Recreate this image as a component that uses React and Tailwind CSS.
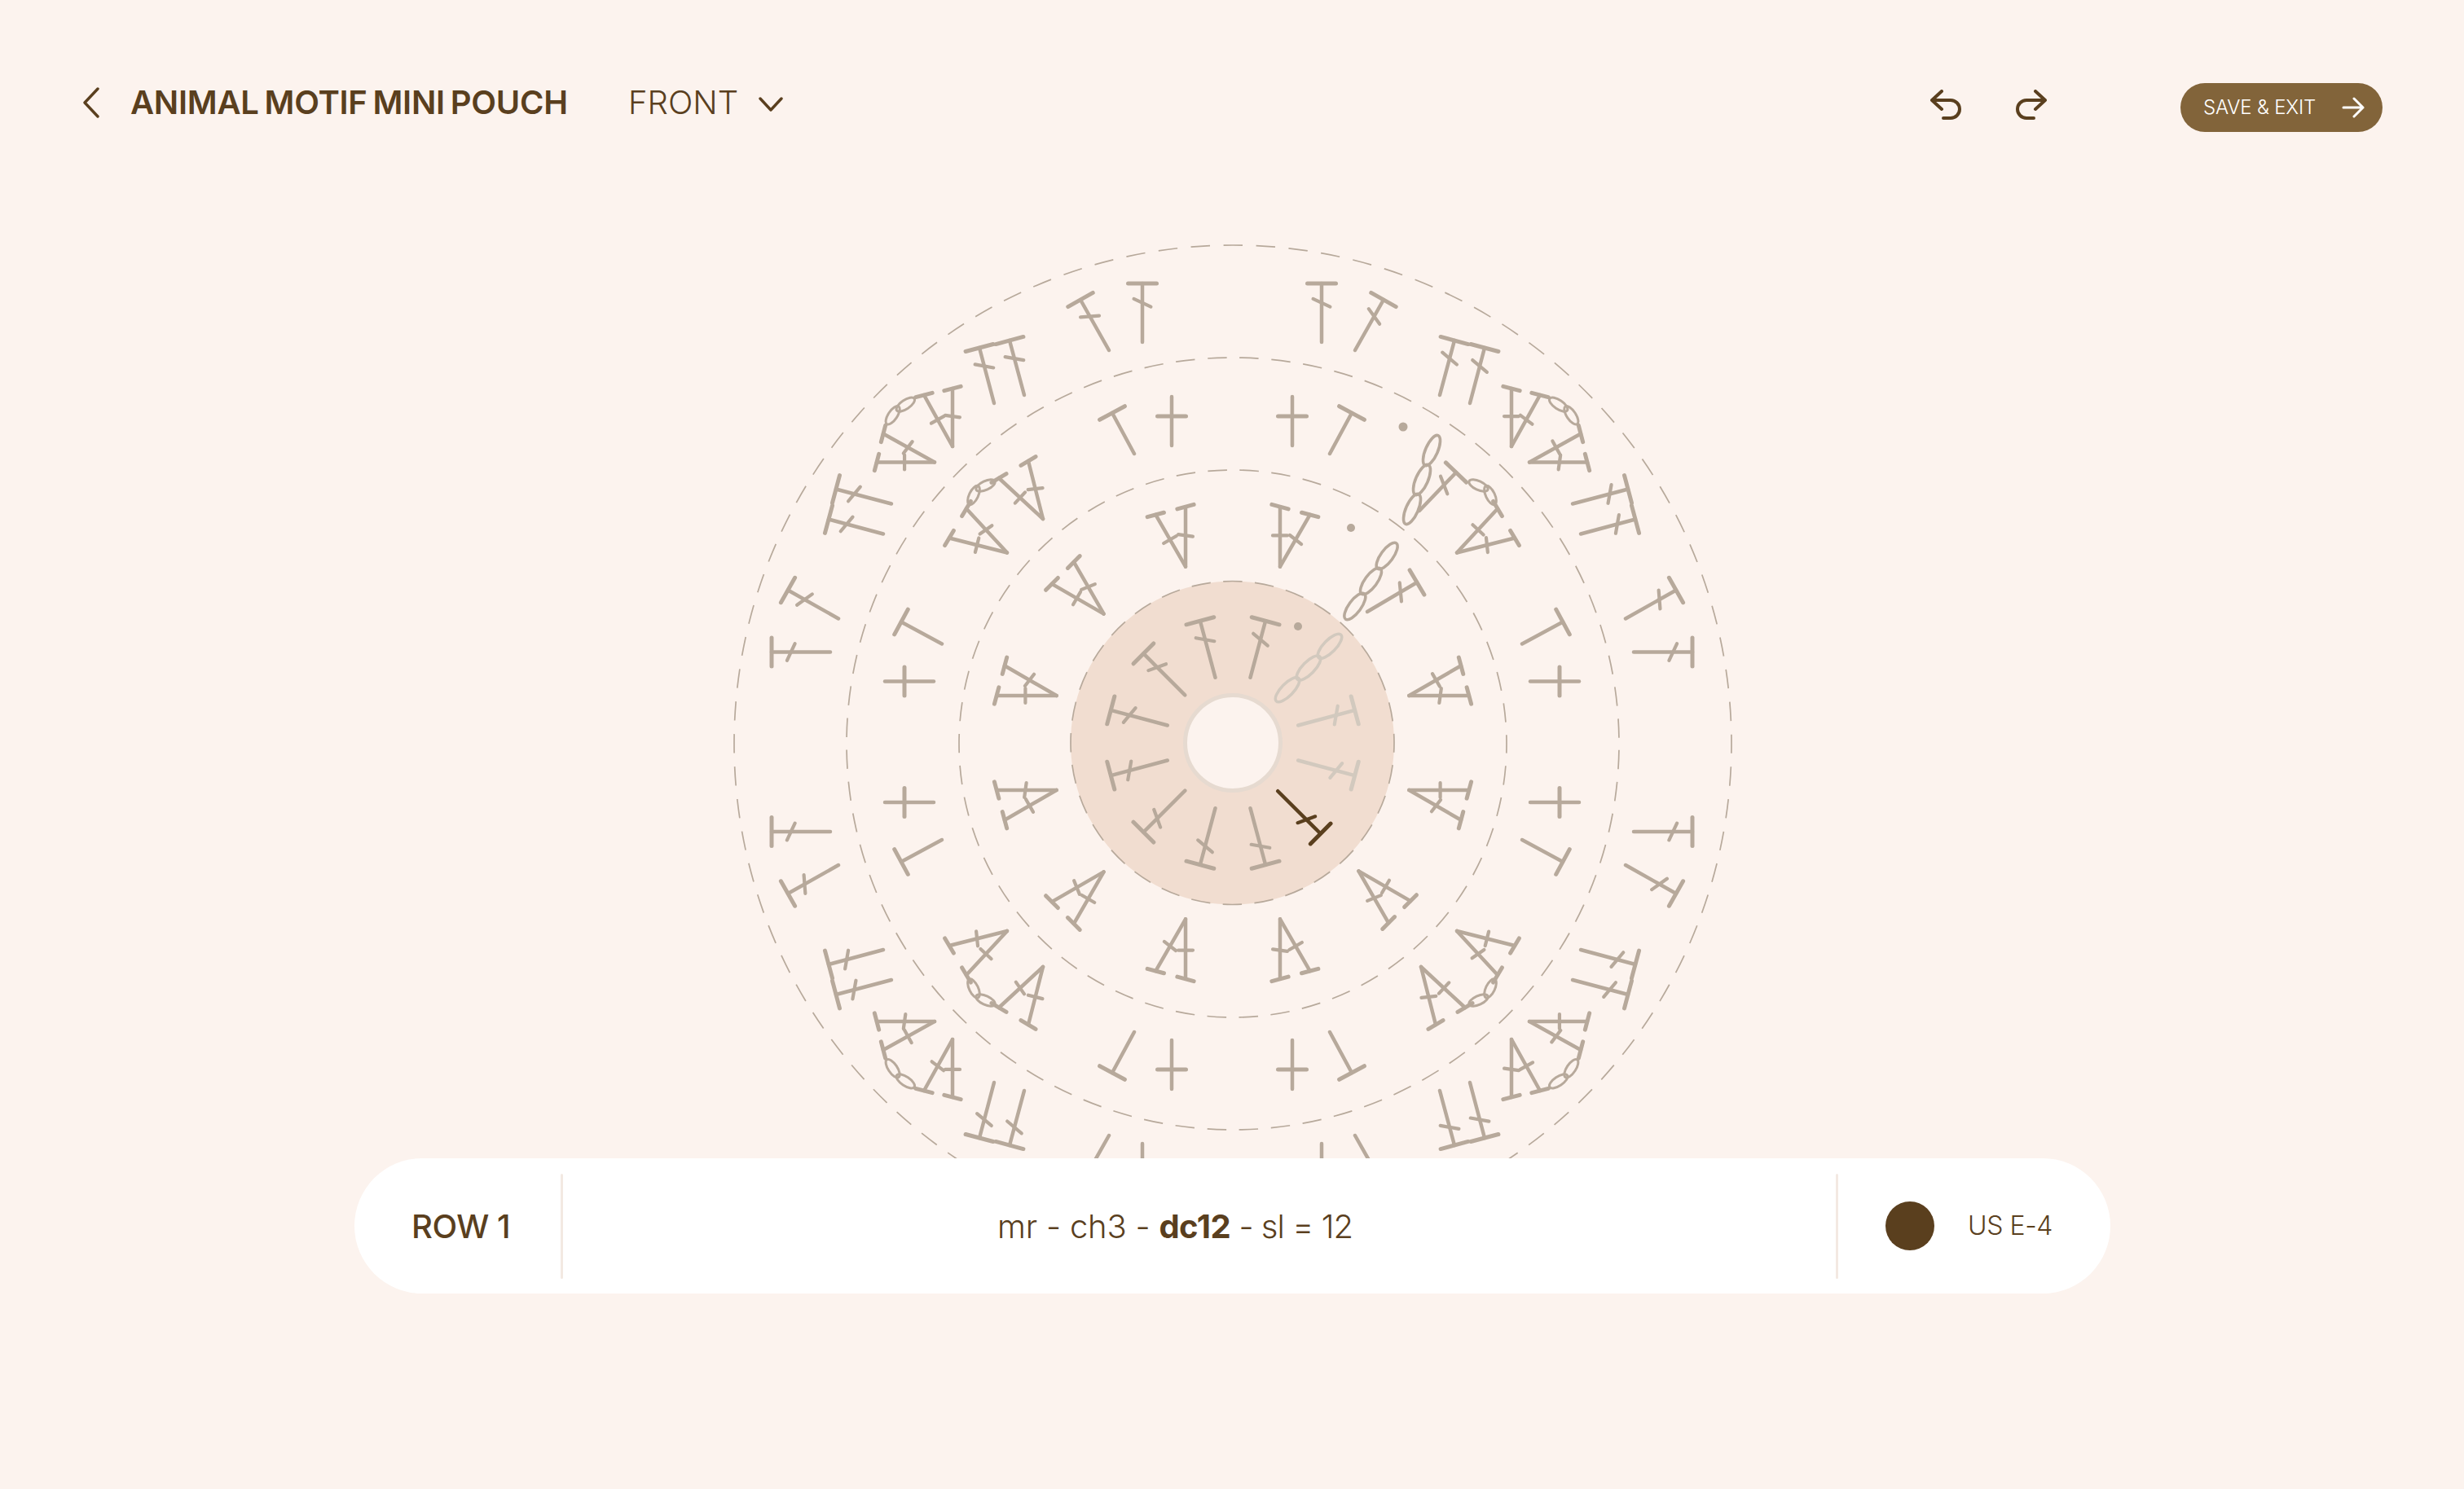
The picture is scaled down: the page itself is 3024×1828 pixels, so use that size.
import React from "react";

const SIZE = 1320;
const C = SIZE / 2;
const BASE = "#b7a99b";
const LIGHT = "#d2c9be";
const DARK = "#5a3f1e";
const rad = (d) => (d * Math.PI) / 180;

function unit(a, b) {
  const dx = b[0] - a[0];
  const dy = b[1] - a[1];
  const l = Math.hypot(dx, dy);
  return [dx / l, dy / l];
}
const polar = (r, deg) => [r * Math.cos(rad(deg)), r * Math.sin(rad(deg))];
const seg = (c, a, b, w = 4.5) => ({ t: "l", c, a, b, w });
const cross = (c, p, dir, len, w = 5) => seg(c, [p[0] - (dir[0] * len) / 2, p[1] - (dir[1] * len) / 2], [p[0] + (dir[0] * len) / 2, p[1] + (dir[1] * len) / 2], w);
const at = (a, b, p) => [a[0] + (b[0] - a[0]) * p, a[1] + (b[1] - a[1]) * p];

function tick(c, base, top, p, len, deg) {
  const u = unit(base, top);
  const v = [-u[1], u[0]];
  const s = Math.sin(rad(deg));
  const k = Math.cos(rad(deg));
  return cross(c, at(base, top, p), [v[0] * k - v[1] * s, v[0] * s + v[1] * k], len, 4.2);
}

function dc(c, base, top) {
  const u = unit(base, top);
  return [seg(c, base, top), cross(c, top, [-u[1], u[0]], 35), tick(c, base, top, 0.67, 23, 25)];
}
function tee(c, base, top) {
  const u = unit(base, top);
  return [seg(c, base, top), cross(c, top, [-u[1], u[0]], 35)];
}
function plus(c, base, top) {
  const u = unit(base, top);
  return [seg(c, base, top), cross(c, at(base, top, 0.6), [-u[1], u[0]], 35)];
}
function vee(c, base, a, b) {
  const mid = unit(base, [(a[0] + b[0]) / 2, (a[1] + b[1]) / 2]);
  const perp = [-mid[1], mid[0]];
  const ua = unit(base, a);
  const crossA = ua[0] * mid[1] - ua[1] * mid[0];
  const ccw = crossA > 0 ? a : b;
  const cw = crossA > 0 ? b : a;
  return [
    seg(c, base, a),
    seg(c, base, b),
    cross(c, a, perp, 21),
    cross(c, b, perp, 21),
    tick(c, base, ccw, 0.52, 18, 0),
    tick(c, base, cw, 0.52, 18, 8),
  ];
}
function chain(c, a, b, n, ry, tilt = 0, w = 3.6) {
  const out = [];
  const ang = (Math.atan2(b[1] - a[1], b[0] - a[0]) * 180) / Math.PI + tilt;
  const rx = Math.hypot(b[0] - a[0], b[1] - a[1]) / (2 * n) + 1;
  for (let i = 0; i < n; i++) {
    out.push({ t: "e", c, p: at(a, b, (i + 0.5) / n), rx, ry, ang, w });
  }
  return out;
}

const rawMirrors = [
  ([x, y]) => [x, y],
  ([x, y]) => [-x, y],
  ([x, y]) => [x, -y],
  ([x, y]) => [-x, -y],
  ([x, y]) => [y, x],
  ([x, y]) => [-y, x],
  ([x, y]) => [y, -x],
  ([x, y]) => [-y, -x],
];
const mirrors = rawMirrors.map((f, i) => (p) => {
  const r = f(p);
  return [r[0] < 0 ? r[0] - 2 : r[0], i >= 4 && r[1] < 0 ? r[1] - 2.5 : r[1]];
});

function buildShapes() {
  const s = [];
  // row 1
  [75, 105, 135, 165, 195, 225, 255, 285].forEach((d) => s.push(...dc(BASE, polar(83, d), polar(155, d))));
  s.push(...dc(LIGHT, polar(83, 15), polar(155, 15)));
  s.push(...dc(LIGHT, polar(83, -15), polar(155, -15)));
  s.push(...dc(DARK, polar(81, 47), polar(155, 46)));
  s.push(...chain(LIGHT, [54, -52], [132, -132], 3, 7.5));
  s.push({ t: "d", c: BASE, p: [80, -143], r: 5 });

  // row 2
  [-15, 15, 45, 75, 105, 135, 165, 195, 225, 255, 285].forEach((d) => {
    const off = d === 45 ? [-4, -1] : [0, 0];
    const mv = (p) => [p[0] + off[0], p[1] + off[1]];
    const top = polar(295, d);
    const t = [-Math.sin(rad(d)) * 19, Math.cos(rad(d)) * 19];
    s.push(...vee(BASE, mv(polar(224, d)), mv([top[0] - t[0], top[1] - t[1]]), mv([top[0] + t[0], top[1] + t[1]])));
  });
  s.push(...dc(BASE, [165, -161], [226, -197]));
  s.push(...chain(BASE, [140, -152], [199, -245], 3, 7.5, 4));
  s.push({ t: "d", c: BASE, p: [145, -264], r: 5 });

  // rows 3 and 4: the chart is mirrored through eight octants
  mirrors.forEach((m, i) => {
    s.push(...plus(BASE, m([73, -365]), m([73, -425])));
    s.push(...tee(BASE, m([119, -355]), m([146, -405])));
    if (i === 0) {
      s.push(...dc(BASE, [229, -285], [274, -332]));
      s.push(...chain(BASE, [214, -269], [250, -377], 3, 7.5, 5));
      s.push({ t: "d", c: BASE, p: [209, -388], r: 5.5 });
    } else {
      s.push(...vee(BASE, m([231, -275]), m([249, -346]), m([285, -325])));
    }
    s.push(...chain(BASE, m([291, -321]), m([312, -311]), 1, 5.5, 0, 3));

    s.push(...dc(BASE, m([109, -492]), m([109, -564])));
    s.push(...dc(BASE, m([150, -482]), m([185, -544])));
    s.push(...dc(BASE, m([254, -427]), m([272, -494])));
    s.push(...dc(BASE, m([291, -417]), m([309, -485])));
    s.push(...vee(BASE, m([342, -364]), m([342, -435]), m([377, -427])));
    s.push(...chain(BASE, m([389.7, -422]), m([409.7, -408.7]), 1, 5.5, 0, 3));
  });
  return s;
}

function Ring({ r, n, cx, cy, gap }) {
  const len = (2 * Math.PI * r) / n;
  const dash = 23.5;
  return (
    <circle
      cx={cx}
      cy={cy}
      r={r}
      fill="none"
      stroke={BASE}
      strokeWidth="1.7"
      strokeDasharray={`${dash} ${len - dash}`}
      strokeDashoffset={dash / 2 + (gap ? len / 2 : 0)}
    />
  );
}

function Shape({ s }) {
  if (s.t === "l") {
    return <line x1={C + s.a[0]} y1={C + s.a[1]} x2={C + s.b[0]} y2={C + s.b[1]} stroke={s.c} strokeWidth={s.w} strokeLinecap="round" />;
  }
  if (s.t === "d") {
    return <circle cx={C + s.p[0]} cy={C + s.p[1]} r={s.r} fill={s.c} />;
  }
  return (
    <ellipse
      cx={C + s.p[0]}
      cy={C + s.p[1]}
      rx={s.rx}
      ry={s.ry}
      fill="none"
      stroke={s.c}
      strokeWidth={s.w}
      transform={`rotate(${s.ang} ${C + s.p[0]} ${C + s.p[1]})`}
    />
  );
}

function Chart() {
  const shapes = buildShapes();
  return (
    <svg width={SIZE} height={SIZE} viewBox={`0 0 ${SIZE} ${SIZE}`} className="block ml-[853px]">
      <circle cx={C - 0.5} cy={C} r={198.5} fill="#f1ddd0" />
      <circle cx={C} cy={C} r={58.5} fill="#fcf3ee" stroke="#e6dad0" strokeWidth="5" />
      <Ring r={198.5} n={32} cx={C - 0.5} cy={C} />
      <Ring r={336} n={54} cx={C} cy={C + 1} />
      <Ring r={474} n={76} cx={C} cy={C + 1} gap />
      <Ring r={612} n={96} cx={C} cy={C + 1} />
      {shapes.map((s, i) => (
        <Shape key={i} s={s} />
      ))}
    </svg>
  );
}

const stroke = { fill: "none", stroke: "currentColor", strokeLinecap: "round", strokeLinejoin: "round" };

export default function App() {
  return (
    <div className="w-[3024px] h-[1828px] overflow-hidden bg-[#fcf3ee] text-[#5a3f1e] font-['Inter',sans-serif]">
      <header className="h-[252px] pl-[102px] pr-[100px] flex items-center">
        <svg width="20" height="38" viewBox="0 0 20 38" {...stroke} strokeWidth="3.4" className="mr-[38px]">
          <path d="M18 2 L2 19 L18 36" />
        </svg>
        <h1 className="text-[40px] leading-none font-semibold tracking-[-0.25px] [word-spacing:-3px] w-[612px] whitespace-nowrap">ANIMAL MOTIF MINI POUCH</h1>
        <span className="text-[40px] leading-none font-light tracking-[0px] w-[160px] -ml-[1px]">FRONT</span>
        <svg width="30" height="18" viewBox="0 0 30 18" {...stroke} strokeWidth="3.4" className="mt-[4px]">
          <path d="M2 2 L15 16 L28 2" />
        </svg>
        <div className="ml-auto self-start mt-[102px] flex items-start">
          <svg width="38" height="38" viewBox="0 0 38 38" {...stroke} strokeWidth="4" className="mt-[8px]">
            <path d="M14 2 L2 13 L14 24 M2 13 H25 a11 11 0 0 1 0 22 H16" />
          </svg>
          <svg width="38" height="38" viewBox="0 0 38 38" {...stroke} strokeWidth="4" className="ml-[67px] mt-[8px]">
            <path d="M24 2 L36 13 L24 24 M36 13 H13 a11 11 0 0 0 0 22 H22" />
          </svg>
          <button className="ml-[164px] w-[248px] h-[60px] rounded-full bg-[#82643a] text-white flex items-center pl-[28px]">
            <span className="text-[24px] leading-none font-light tracking-[-0.2px] whitespace-nowrap">SAVE &amp; EXIT</span>
            <svg width="28" height="26" viewBox="0 0 28 26" {...stroke} strokeWidth="3" className="ml-auto mr-[22px]">
              <path d="M2 13 H26 M15 2 L26 13 L15 24" />
            </svg>
          </button>
        </div>
      </header>
      <main className="h-[1170px] overflow-hidden">
        <Chart />
      </main>
      <section className="ml-[435px] w-[2155px] h-[166px] rounded-full bg-white flex items-center">
        <span className="w-[253px] pl-[70px] pt-[2px] text-[40px] leading-none font-medium tracking-[-0.5px] whitespace-nowrap">ROW 1</span>
        <div className="w-[3px] h-[129px] rounded-full bg-[#f3e9e2]" />
        <p className="flex-1 pl-[533px] pt-[2px] text-[40px] leading-none font-light whitespace-nowrap">
          <span className="tracking-[-0.2px]">mr - ch3 - </span>
          <b className="font-bold tracking-[-0.55px]">dc12</b>
          <span className="tracking-[-0.95px]"> - sl = 12</span>
        </p>
        <div className="w-[3px] h-[129px] rounded-full bg-[#f3e9e2]" />
        <div className="w-[334px] flex items-center pl-[58px]">
          <div className="w-[60px] h-[60px] rounded-full bg-[#5a3f1e]" />
          <span className="ml-[41px] text-[32px] leading-none font-light tracking-[-0.4px] whitespace-nowrap">US E-4</span>
        </div>
      </section>
    </div>
  );
}
